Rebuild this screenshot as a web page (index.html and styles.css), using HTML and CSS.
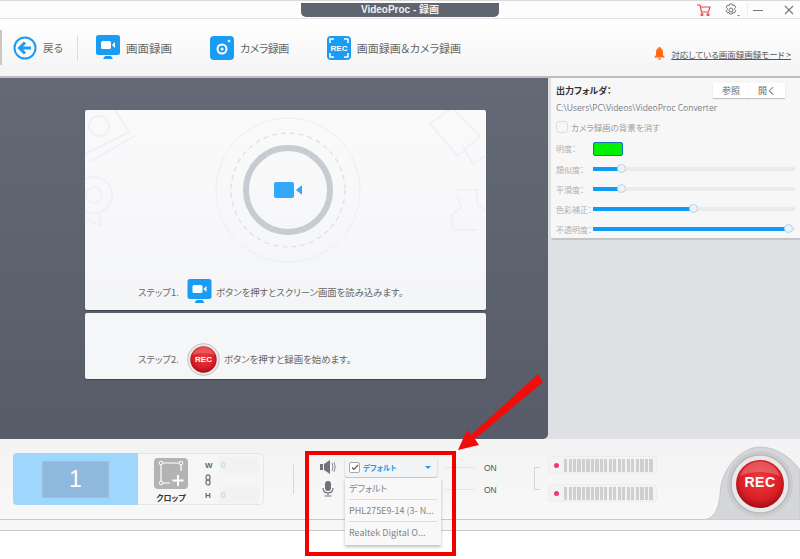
FILE: index.html
```html
<!DOCTYPE html>
<html lang="ja">
<head>
  <meta charset="UTF-8" />
  <title>VideoProc - 録画</title>
  <link rel="stylesheet" href="styles.css">
</head>
<body>
  <svg class="defs" width="0" height="0">
    <symbol id="monitor" viewBox="0 0 24 25">
      <rect width="24" height="20" rx="2.5" fill="#1a9cf5" />
      <rect x="5" y="6" width="10" height="8" rx="1.5" fill="#fff" />
      <path d="M16 10l3-3v6z" fill="#fff" />
      <path d="M7 24l2-3h6l2 3z" fill="#1a9cf5" />
    </symbol>
    <symbol id="rec" viewBox="0 0 60 60">
      <defs>
        <radialGradient id="recRed" cx="50%" cy="40%" r="60%">
          <stop offset="0" stop-color="#ee3a3f" />
          <stop offset="0.7" stop-color="#d81f26" />
          <stop offset="1" stop-color="#a30e14" />
        </radialGradient>
      </defs>
      <circle cx="30" cy="30" r="29" fill="#e9e9e9" stroke="#b9babc" stroke-width="1.5" />
      <circle cx="30" cy="30" r="24" fill="url(#recRed)" />
      <path d="M10 22a21 21 0 0 1 40 0q-20-8-40 0z" fill="#fff" opacity=".22" />
    </symbol>
  </svg>

  <div class="app">
    <header class="titlebar">
      <div class="title-spacer"></div>
      <div class="title-tab">VideoProc - 録画</div>
      <div class="title-tools">
        <svg class="cart" width="14" height="12" viewBox="0 0 14 12" fill="none" stroke="#ee4444" stroke-width="1.2">
          <path d="M0 1h3l1.5 7h7L13 3H4" />
          <circle cx="5" cy="10.5" r="1" />
          <circle cx="11" cy="10.5" r="1" />
        </svg>
        <svg class="gear" width="16" height="14" viewBox="0 0 16 14" fill="none" stroke="#777">
          <circle cx="7" cy="7" r="2" />
          <path d="M5.6 1h2.8l.4 1.6 1.6-.6 1.4 2.4-1.2 1.1v1l1.2 1.1-1.4 2.4-1.6-.6-.4 1.6H5.6l-.4-1.6-1.6.6-1.4-2.4 1.2-1.1v-1L2.2 4.4l1.4-2.4 1.6.6z" />
          <path d="M13 12h3l-1.500 1.500z" fill="#777" stroke="none" />
        </svg>
        <span class="tool-sep"></span>
        <span class="win-min"></span>
        <svg class="win-close" width="10" height="10" viewBox="0 0 10 10" stroke="#777" stroke-width="1.100">
          <path d="M1 1l8 8M9 1l-8 8" />
        </svg>
      </div>
    </header>

    <nav class="toolbar">
      <span class="edge"></span>
      <div class="tool back">
        <svg width="24" height="24" viewBox="0 0 24 24" fill="none" stroke="#1a9cf5">
          <circle cx="12" cy="12" r="10.500" stroke-width="2" />
          <path d="M18 12H7M12 6.500L6.500 12l5.500 5.500" stroke-width="3" />
        </svg>
        <span>戻る</span>
      </div>
      <span class="tool-divider"></span>
      <div class="tool screen">
        <svg width="24" height="25"><use href="#monitor" /></svg>
        <span>画面録画</span>
      </div>
      <div class="tool camera">
        <svg width="24" height="24" viewBox="0 0 24 24">
          <rect width="24" height="24" rx="4" fill="#1a9cf5" />
          <circle cx="12" cy="13" r="4.500" fill="none" stroke="#fff" stroke-width="2" />
          <circle cx="12" cy="13" r="1.500" fill="#fff" />
          <circle cx="19" cy="5" r="1.300" fill="#fff" />
        </svg>
        <span>カメラ録画</span>
      </div>
      <div class="tool both">
        <svg width="24" height="24" viewBox="0 0 24 24">
          <rect width="24" height="24" rx="4" fill="#1a9cf5" />
          <path d="M3 7V3h4M17 3h4v4M21 17v4h-4M7 21H3v-4" fill="none" stroke="#fff" stroke-width="1.500" />
          <text x="12" y="15" class="both-text">REC</text>
        </svg>
        <span>画面録画＆カメラ録画</span>
      </div>
      <div class="notice">
        <svg width="11" height="13" viewBox="0 0 11 13" fill="#ff6a13">
          <path d="M5.500 0a1 1 0 0 1 1 1.200C8.500 1.700 9 3.500 9 5.500V8l2 2.500H0L2 8V5.500c0-2 .5-3.800 2.500-4.300a1 1 0 0 1 1-1.200z" />
          <path d="M4 11.300h3a1.500 1.500 0 0 1-3 0z" />
        </svg>
        <span class="notice-text">対応している画面録画録モード &gt;</span>
      </div>
    </nav>

    <main class="content">
      <section class="stage">
        <div class="card card-top">
          <svg class="card-art" width="401" height="200" viewBox="0 0 401 200" fill="none" stroke="#f0f1f4" stroke-width="2">
            <circle cx="14" cy="16" r="10" />
            <path d="M0 44L44 22 30 0M4 52l46-26" />
            <circle cx="9" cy="85" r="18" />
            <circle cx="9" cy="85" r="8" />
            <path d="M0 108l16 8-2-12" />
            <path d="M345 14l22-16 28 28-22 20zM378 36l10 18 12-8" />
            <path d="M372 80h20v14l8 6M392 120h-24l-2-14 10-8-4-14" />
          </svg>
          <svg class="rings" width="150" height="150" viewBox="0 0 150 150" fill="none">
            <circle cx="75" cy="75" r="72" stroke="#eceef1" />
            <circle cx="75" cy="75" r="57" stroke="#dcdfe3" stroke-width="1.200" stroke-dasharray="5 4" />
            <circle cx="75" cy="75" r="42" stroke="#c7ccd2" stroke-width="6" />
            <rect x="61" y="67" width="20" height="16" rx="2" fill="#33a9fb" />
            <path d="M83.500 75l5-4v8z" fill="#33a9fb" stroke="#33a9fb" stroke-linejoin="round" />
          </svg>
          <div class="step step-one">
            <span class="step-label">ステップ1.</span>
            <svg width="25" height="25"><use href="#monitor" /></svg>
            <span>ボタンを押すとスクリーン画面を読み込みます。</span>
          </div>
        </div>
        <div class="card card-bottom">
          <div class="step step-two">
            <span class="step-label">ステップ2.</span>
            <span class="rec-small">
              <svg width="33" height="33"><use href="#rec" /></svg>
              <b>REC</b>
            </span>
            <span>ボタンを押すと録画を始めます。</span>
          </div>
        </div>
      </section>

      <aside class="side">
        <div class="side-panel">
          <div class="folder-row">
            <strong>出力フォルダ：</strong>
            <div class="btn-group">
              <button>参照</button>
              <button>開く</button>
            </div>
          </div>
          <p class="path">C:\Users\PC\Videos\VideoProc Converter</p>
          <label class="check-row"><span class="check"></span>カメラ録画の背景を消す</label>
          <div class="param first">
            <span class="param-label">明度：</span>
            <span class="swatch"></span>
          </div>
          <div class="param">
            <span class="param-label">類似度：</span>
            <span class="slider"><span class="fill" style="width:29px"></span></span>
          </div>
          <div class="param">
            <span class="param-label">平滑度：</span>
            <span class="slider"><span class="fill" style="width:29px"></span></span>
          </div>
          <div class="param">
            <span class="param-label">色彩補正：</span>
            <span class="slider"><span class="fill" style="width:101px"></span></span>
          </div>
          <div class="param">
            <span class="param-label">不透明度：</span>
            <span class="slider"><span class="fill" style="width:196px"></span></span>
          </div>
        </div>
      </aside>
    </main>

    <footer class="bottom">
      <div class="source">
        <div class="monitor-pick"><span class="monitor-num">1</span></div>
        <div class="crop">
          <svg width="34" height="31" viewBox="0 0 34 31" fill="none" stroke="#fff">
            <rect width="34" height="31" rx="4" fill="#b3b3b3" stroke="none" />
            <path d="M7 5h20v8M7 5v20h9" stroke-width="1.200" />
            <circle cx="7" cy="5" r="1.800" fill="#b3b3b3" />
            <circle cx="27" cy="5" r="1.800" fill="#b3b3b3" />
            <circle cx="7" cy="25" r="1.800" fill="#b3b3b3" />
            <path d="M24 17v11M18.500 22.500h11" stroke-width="2" />
          </svg>
          <b>クロップ</b>
        </div>
        <div class="size">
          <div class="size-row"><b>W</b><span class="size-input">0</span></div>
          <svg class="link" width="6" height="12" viewBox="0 0 6 12" fill="none" stroke="#777" stroke-width="1.300">
            <rect x="1" y="1" width="4" height="5" rx="2" />
            <rect x="1" y="6" width="4" height="5" rx="2" />
          </svg>
          <div class="size-row"><b>H</b><span class="size-input">0</span></div>
        </div>
      </div>
      <span class="bottom-divider"></span>
      <div class="audio">
        <div class="audio-row">
          <svg class="audio-icon" width="16" height="14" viewBox="0 0 16 14" fill="#6f7276">
            <rect x="0" y="4" width="3" height="6" />
            <path d="M4 4l6-4v14l-6-4z" />
            <path d="M12 3q2 4 0 8M14 2q2.500 5 0 10" fill="none" stroke="#8a8d91" />
          </svg>
          <div class="select">
            <span class="select-check">
              <svg width="8" height="7" viewBox="0 0 8 7" fill="none" stroke="#555" stroke-width="1.200"><path d="M1 3.500l2 2L7 1" /></svg>
            </span>
            <span class="select-value">デフォルト</span>
            <span class="caret"></span>
          </div>
          <span class="line"></span>
          <span class="on">ON</span>
        </div>
        <div class="audio-row">
          <svg class="audio-icon" width="16" height="16" viewBox="0 0 16 16" fill="#6f7276">
            <rect x="5" y="0" width="6" height="10" rx="3" />
            <path d="M3 7q0 5 5 5t5-5M8 12v2M4.500 15h7" fill="none" stroke="#6f7276" stroke-width="1.200" />
          </svg>
          <span class="select-gap"></span>
          <span class="line"></span>
          <span class="on">ON</span>
        </div>
      </div>
      <span class="bracket"></span>
      <div class="meters">
        <div class="meter"><i></i><span class="bars"></span></div>
        <div class="meter"><i></i><span class="bars"></span></div>
      </div>
    </footer>
    <div class="strip"></div>
  </div>

  <div class="rec-dock">
    <svg class="dock-shape" width="96" height="74" viewBox="0 0 96 74">
      <path d="M0 74Q14 72 16 50C16 22 38 1 56 1C72 1 88 12 96 24V74Z" fill="#d5d6d9" stroke="#c6c7ca" />
      <circle cx="56" cy="38" r="33" fill="#c9cbce" />
    </svg>
    <svg class="dock-button" width="60" height="60"><use href="#rec" /></svg>
    <b>REC</b>
  </div>

  <ul class="dropdown">
    <li>デフォルト</li>
    <li>PHL275E9-14 (3- N...</li>
    <li>Realtek Digital O...</li>
  </ul>

  <div class="callout"></div>
  <svg class="arrow" width="100" height="80" viewBox="0 0 100 80">
    <path d="M86 0L91 8 23 65 27 71 6 76 15 56 19 61z" fill="#f20d0d" />
  </svg>
</body>
</html>
```

FILE: styles.css
```css
*, *::before, *::after { box-sizing: border-box; }

body {
  margin: 0;
  width: 800px;
  height: 559px;
  overflow: hidden;
  position: relative;
  background-color: #fff;
  font-family: "Noto Sans CJK JP", "Liberation Sans", sans-serif;
  font-feature-settings: "palt";
  font-size: 10px;
  color: #666;
}

.defs { position: absolute; }

.app {
  height: 531px;
  display: flex;
  flex-direction: column;
  border-bottom: 1px solid #c9cacc;
}

/* title bar */
.titlebar {
  height: 19px;
  display: flex;
  padding-top: 2px;
  background-color: #fdfdfd;
  border-top: 1px solid #d9d9d9;
  border-bottom: 1px solid #e2e2e2;
}

.title-spacer { width: 301px; }

.title-tab {
  width: 198px;
  height: 14px;
  background-color: #5e6470;
  border-radius: 0 0 5px 5px;
  color: #f1f1f1;
  font-family: "Liberation Sans", "Noto Sans CJK JP", sans-serif;
  font-size: 10px;
  font-weight: bold;
  line-height: 14px;
  text-align: center;
}

.title-tools {
  flex: 1;
  display: flex;
  align-items: center;
  padding-left: 198px;
  height: 14px;
}

.gear { margin-left: 13px; }

.tool-sep {
  width: 1px;
  height: 14px;
  margin-left: 7px;
  background-color: #eee;
}

.win-min {
  width: 10px;
  height: 1px;
  margin-left: 5px;
  background-color: #777;
}

.win-close { margin-left: 21px; }

/* toolbar */
.toolbar {
  height: 59px;
  display: flex;
  align-items: center;
  background: linear-gradient(#fff, #f4f4f5);
  border-bottom: 2px solid #bcbec2;
}

.edge {
  width: 2px;
  height: 35px;
  background-color: #c8c8c8;
}

.tool {
  display: flex;
  align-items: center;
  gap: 7px;
  font-size: 11.500px;
  color: #666;
}

.back { margin-left: 11px; gap: 6px; font-size: 10.500px; }
.tool-divider { width: 1px; height: 26px; margin-left: 14px; background-color: #ddd; }
.screen { margin-left: 18px; gap: 6px; }
.camera { margin-left: 38px; gap: 6px; font-size: 11px; letter-spacing: -0.5px; }
.both { margin-left: 38px; gap: 6px; font-size: 11px; }

.both-text {
  fill: #fff;
  font-family: "Liberation Sans", sans-serif;
  font-size: 8px;
  font-weight: bold;
  text-anchor: middle;
}

.notice {
  margin-left: auto;
  margin-right: 9px;
  margin-top: 12px;
  display: flex;
  align-items: center;
  gap: 6px;
}

.notice-text {
  font-size: 8.500px;
  color: #555;
  text-decoration: underline;
  white-space: nowrap;
}

/* main area */
.content {
  height: 361px;
  display: flex;
  background-color: #dfe0e3;
}

.stage {
  width: 548px;
  padding: 32px 0 0 85px;
  background: linear-gradient(#636975, #575c68);
  border-radius: 0 0 5px 0;
  display: flex;
  flex-direction: column;
  gap: 3px;
}

.card {
  width: 401px;
  background-color: #f5f6f8;
  border-radius: 2px;
  box-shadow: 0 1px 1px rgba(0,0,0,0.3);
  position: relative;
}

.card-top {
  height: 200px;
  background: linear-gradient(#fafafb, #f4f5f7);
  display: flex;
  flex-direction: column;
  align-items: center;
}

.card-bottom {
  height: 66px;
}

.card-art {
  position: absolute;
  top: 0;
  left: 0;
}

.rings {
  position: relative;
  margin: 5px 0 0 5px;
}

.step {
  display: flex;
  align-items: center;
  width: 100%;
  font-size: 9.400px;
  color: #666;
  white-space: nowrap;
}

.step-one {
  height: 25px;
  margin-top: 14px;
  padding-left: 53px;
  gap: 4px;
  position: relative;
}

.step-two {
  height: 34px;
  padding: 29px 0 0 53px;
  box-sizing: content-box;
  gap: 4px;
}

.step-label { width: 45px; }

.rec-small {
  width: 33px;
  height: 33px;
  position: relative;
  display: flex;
  align-items: center;
  justify-content: center;
}

.rec-small svg { position: absolute; top: 0; left: 0; }

.rec-small b {
  position: relative;
  color: #fff;
  font-family: "Liberation Sans", sans-serif;
  font-size: 8px;
}

/* right side */
.side {
  flex: 1;
  padding-left: 3px;
}

.side-panel {
  height: 162px;
  padding: 4px 5px 0 5px;
  background-color: #f7f7f8;
  border-bottom: 2px solid #c4c5c8;
  border-radius: 0 0 0 3px;
}

.folder-row {
  display: flex;
  justify-content: space-between;
  align-items: center;
  padding-right: 10px;
  height: 16px;
}

.folder-row strong {
  font-size: 9px;
  color: #333;
}

.btn-group { display: flex; }

.btn-group button {
  width: 36px;
  height: 15px;
  padding: 0;
  border: none;
  background-color: #fff;
  color: #666;
  font-family: inherit;
  font-size: 9px;
  line-height: 15px;
  box-shadow: 0 1px 1px rgba(0,0,0,0.2);
}

.path {
  margin: 3px 0 0;
  height: 14px;
  line-height: 14px;
  font-family: "Open Sans", "Noto Sans CJK JP", sans-serif;
  font-size: 8.500px;
  color: #7d8088;
  white-space: nowrap;
}

.check-row {
  display: flex;
  align-items: center;
  gap: 3px;
  margin-top: 5px;
  height: 13px;
  font-size: 8.500px;
  color: #a0a0a0;
}

.check {
  width: 12px;
  height: 12px;
  border: 1px solid #ddd;
  border-radius: 3px;
}

.param {
  display: flex;
  align-items: center;
  height: 20px;
  font-size: 8px;
  color: #b0b0b0;
}

.param.first { margin-top: 5px; height: 21px; }

.param-label {
  width: 37px;
  white-space: nowrap;
}

.swatch {
  width: 30px;
  height: 14px;
  background-color: #00f000;
  border: 1px solid #1273c4;
  border-radius: 2px;
}

.slider {
  width: 202px;
  height: 4px;
  background-color: #ebebeb;
  display: block;
}

.fill {
  display: block;
  height: 4px;
  background-color: #0d9bf7;
  position: relative;
}

.fill::after {
  content: "";
  position: absolute;
  right: -4px;
  top: -3px;
  width: 9px;
  height: 9px;
  border-radius: 50%;
  background-color: #eef2f5;
  border: 1px solid #a9d8f8;
}

/* bottom panel */
.bottom {
  height: 81px;
  display: flex;
  align-items: flex-start;
  padding: 14px 0 0 13px;
  background: linear-gradient(#f3f3f4, #f8f8f9);
  border-bottom: 1px solid #c8c9cb;
  position: relative;
}

.source {
  width: 251px;
  height: 52px;
  display: flex;
  background-color: #f6f6f6;
  border: 1px solid #e6e6e6;
  border-radius: 4px;
}

.monitor-pick {
  width: 125px;
  margin: -1px 0 -1px -1px;
  padding: 8px 0 0 29px;
  background-color: #9dd7fd;
  border-radius: 4px 0 0 4px;
}

.monitor-num {
  display: block;
  width: 67px;
  height: 37px;
  background-color: #8eb8dc;
  border: 1px solid #a3bdd3;
  color: #fff;
  font-family: "Liberation Sans", sans-serif;
  font-size: 23px;
  line-height: 35px;
  text-align: center;
}

.crop {
  width: 34px;
  margin: 4px 0 0 16px;
  display: flex;
  flex-direction: column;
  align-items: center;
}

.crop b {
  margin-top: 2px;
  font-size: 8px;
  line-height: 13px;
  color: #333;
  white-space: nowrap;
}

.size {
  margin: 3px 0 0 17px;
  display: flex;
  flex-direction: column;
  align-items: flex-start;
}

.size-row {
  display: flex;
  align-items: center;
  gap: 8px;
  height: 16px;
}

.size-row b {
  width: 6px;
  font-family: "Liberation Sans", sans-serif;
  font-size: 8px;
  color: #666;
}

.size-input {
  width: 40px;
  height: 16px;
  padding-left: 2px;
  background-color: #f2f2f2;
  border-radius: 2px;
  color: #ccc;
  font-size: 8px;
  line-height: 16px;
}

.link { margin: 1px 0; display: block; }

.bottom-divider {
  width: 1px;
  height: 30px;
  margin: 11px 0 0 29px;
  background-color: #d8d8d8;
}

.audio {
  margin: 4px 0 0 26px;
  display: flex;
  flex-direction: column;
  gap: 2px;
}

.audio-row {
  height: 20px;
  display: flex;
  align-items: center;
}

.audio-icon { width: 16px; }

.select {
  width: 92px;
  height: 20px;
  margin-left: 9px;
  padding: 0 4px;
  display: flex;
  align-items: center;
  gap: 3px;
  background-color: #f3f4f6;
  border-radius: 2px;
  box-shadow: 0 1px 2px rgba(0,0,0,0.25);
}

.select-gap { width: 92px; margin-left: 9px; }

.select-check {
  width: 11px;
  height: 11px;
  display: flex;
  align-items: center;
  justify-content: center;
  border: 1px solid #a7a9ad;
  border-radius: 2px;
  background-color: #fff;
}

.select-value {
  flex: 1;
  color: #1a9cf5;
  font-size: 7.500px;
  font-weight: bold;
}

.caret {
  width: 0;
  height: 0;
  border-left: 3px solid transparent;
  border-right: 3px solid transparent;
  border-top: 3px solid #1a9cf5;
  margin-right: 2px;
}

.line {
  width: 30px;
  height: 1px;
  margin-left: 8px;
  background-color: #e3e3e3;
}

.on {
  margin-left: 9px;
  padding-top: 2px;
  font-family: "Liberation Sans", sans-serif;
  font-size: 8.500px;
  color: #555;
}

.bracket {
  width: 6px;
  height: 23px;
  margin: 14px 0 0 37px;
  border: 1px solid #d6d6d6;
  border-right: none;
}

.meters {
  margin: 3px 0 0 8px;
  display: flex;
  flex-direction: column;
  gap: 10px;
}

.meter {
  width: 109px;
  height: 18px;
  display: flex;
  align-items: center;
  padding-left: 5px;
  gap: 5px;
  background-color: #f3f3f3;
  border: 1px solid #ededed;
  border-radius: 3px;
}

.meter i {
  width: 5px;
  height: 5px;
  border-radius: 50%;
  background-color: #f5347f;
}

.bars {
  width: 89px;
  height: 13px;
  background: repeating-linear-gradient(90deg, #cfcfcf 0 3px, transparent 3px 4.500px);
}

.strip {
  flex: 1;
  background-color: #f7f7f7;
}

/* things lying over the rest */
.rec-dock {
  position: absolute;
  top: 446px;
  left: 704px;
  width: 96px;
  height: 74px;
}

.dock-shape { position: absolute; top: 0; left: 0; }
.dock-button { position: absolute; top: 8px; left: 26px; }

.rec-dock b {
  position: absolute;
  top: 28px;
  left: 38px;
  width: 36px;
  color: #fff;
  font-family: "Liberation Sans", sans-serif;
  font-size: 14px;
  letter-spacing: 0.5px;
  text-align: center;
}

.dropdown {
  position: absolute;
  top: 478px;
  left: 345px;
  width: 96px;
  height: 67px;
  margin: 0;
  padding: 0 4px;
  list-style: none;
  background-color: #f8f8f8;
  box-shadow: 0 2px 3px rgba(0,0,0,0.25);
}

.dropdown li {
  height: 22px;
  line-height: 21px;
  font-size: 9px;
  color: #858585;
  white-space: nowrap;
  border-bottom: 1px solid #dcdcdc;
}

.dropdown li:last-child { border-bottom: none; }

.callout {
  position: absolute;
  top: 451px;
  left: 305px;
  width: 151px;
  height: 105px;
  border: 4px solid #f20000;
}

.arrow {
  position: absolute;
  top: 374px;
  left: 452px;
}
```
